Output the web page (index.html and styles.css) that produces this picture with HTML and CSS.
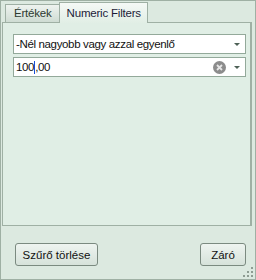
FILE: index.html
```html
<!DOCTYPE html>
<html lang="hu">
<head>
  <meta charset="UTF-8">
  <title>Szűrő</title>
  <link rel="stylesheet" href="styles.css">
</head>
<body>
  <div class="window">
    <!-- Fülek -->
    <div class="tabs">
      <div class="tab">Értékek</div>
      <div class="tab active">Numeric Filters</div>
    </div>

    <!-- Szűrő panel -->
    <div class="panel">
      <div class="combo">
        <span class="combo-text">-Nél nagyobb vagy azzal egyenlő</span>
        <span class="arrow"></span>
      </div>
      <div class="combo">
        <span class="combo-text">100<span class="caret"></span>,00</span>
        <svg class="clear" width="13" height="13" viewBox="0 0 13 13">
          <circle cx="6.5" cy="6.5" r="6.5" fill="#8c8c8c"/>
          <path d="M4 4 L9 9 M9 4 L4 9" stroke="#e6e6e6" stroke-width="1.8"/>
        </svg>
        <span class="arrow"></span>
      </div>
    </div>

    <div class="footer">
      <button class="btn">Szűrő törlése</button>
      <button class="btn">Záró</button>
    </div>
    <svg class="grip" width="10" height="10" viewBox="0 0 10 10">
      <g fill="#8e9c92">
        <rect x="8" y="0" width="2" height="2"/>
        <rect x="4" y="4" width="2" height="2"/><rect x="8" y="4" width="2" height="2"/>
        <rect x="0" y="8" width="2" height="2"/><rect x="4" y="8" width="2" height="2"/><rect x="8" y="8" width="2" height="2"/>
      </g>
    </svg>
  </div>
</body>
</html>
```

FILE: styles.css
```css
* { box-sizing: border-box; margin: 0; padding: 0; }
body { font-family: Tahoma, "Liberation Sans", sans-serif; font-size: 11.5px; color: #1e1e1e; background: #fff; }

.window {
  width: 256px; height: 280px; position: relative;
  background: #dce9e0; border: 1px solid #9fb0a4;
  display: flex; flex-direction: column;
  padding: 0 3px 0 1px;
}

/* Fülek */
.tabs { display: flex; align-items: flex-end; height: 21px; padding-left: 3px; }
.tab {
  height: 18px; padding: 0 7px 0 8px; line-height: 17px;
  border: 1px solid #9fb0a4; border-bottom: none; border-right: none;
  background: linear-gradient(#eef3ef, #cfdcd3);
  color: #2d3a31; white-space: nowrap; letter-spacing: -0.2px;
}
.tab.active {
  height: 21px; margin-bottom: -1px; padding: 0 6px 0 7px; line-height: 20px;
  border-right: 1px solid #9fb0a4;
  background: linear-gradient(#f5f9f6, #e1eee5);
  color: #1c1c38; position: relative; z-index: 1;
}

/* Panel */
.panel {
  height: 204px; border: 1px solid #9fb0a4; border-right-width: 2px;
  background: #e0eee5;
  padding: 11px 4px 0 10px;
  display: flex; flex-direction: column; gap: 3px;
}
.combo {
  height: 20px; background: #fff; border: 1px solid #93a99a;
  display: flex; align-items: center; padding: 0 5px 0 2px;
}
.combo-text { flex: 1; white-space: nowrap; color: #111; letter-spacing: -0.35px; }
.caret { display: inline-block; width: 1px; height: 13px; background: #1a4fd6; vertical-align: -3px; }
.arrow {
  width: 0; height: 0; margin-left: 8px;
  border-left: 3px solid transparent; border-right: 3px solid transparent;
  border-top: 3px solid #4e6156;
}
.clear { display: block; }

/* Gombok */
.footer { display: flex; justify-content: space-between; padding: 17px 6px 0 13px; }
.btn {
  height: 23px; padding: 0 4px; white-space: nowrap;
  font-family: Tahoma, "Liberation Sans", sans-serif; font-size: 11.5px; color: #111;
  background: linear-gradient(#eef4f0, #d6e2da);
  border: 1px solid #7b8a80; border-radius: 3px;
}
.btn:first-child { width: 83px; }
.btn:last-child { width: 46px; }

.grip { position: absolute; right: 2px; bottom: 2px; }
```
